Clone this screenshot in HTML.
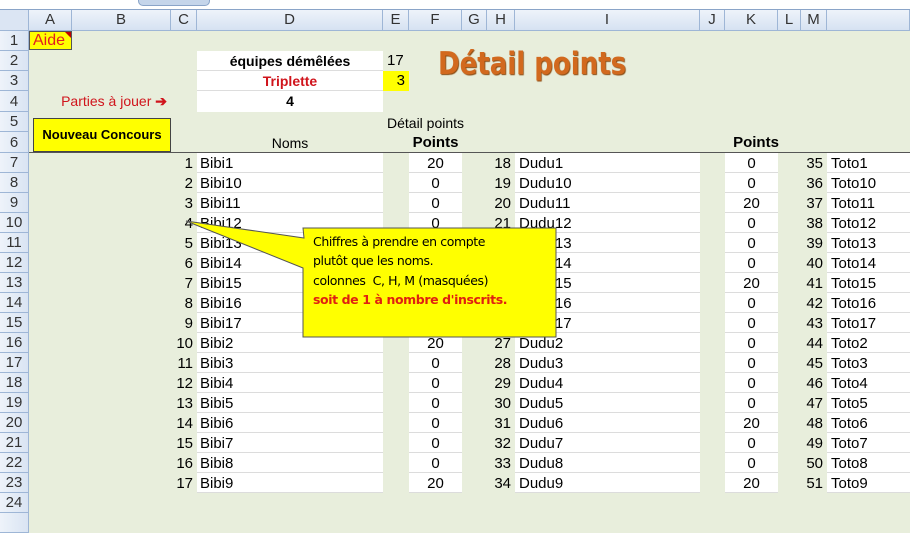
<!DOCTYPE html>
<html><head><meta charset="utf-8"><style>
*{margin:0;padding:0;box-sizing:border-box}
body{width:910px;height:518px;overflow:hidden;background:#E8EEDC;font-family:"Liberation Sans",Arial,sans-serif;font-size:15px;position:relative;color:#000}
.top{position:absolute;left:0;top:0;width:910px;height:10px;background:#fff;border-bottom:1px solid #8aa4c8}
.tab{position:absolute;left:138px;top:0;width:72px;height:6px;background:#c5d5ea;border:1px solid #8aa4c8;border-top:none;border-radius:0 0 5px 5px}
.ch{position:absolute;top:10px;height:21px;background:linear-gradient(#eef3fa,#d6e2f2);border-right:1px solid #9eb6d6;border-bottom:1px solid #9eb6d6;text-align:center;line-height:20px;color:#333;font-size:15px}
.rh{position:absolute;left:0;width:29px;background:linear-gradient(90deg,#eef3fa,#d9e4f3);border-right:1px solid #9eb6d6;border-bottom:1px solid #9eb6d6;text-align:center;color:#333;font-size:15px}
.r{position:absolute;left:29px;width:881px;height:20px}
.r span{position:absolute;top:0;height:20px;line-height:21px;white-space:nowrap}
.w{background:#fff;border-bottom:1px solid #dcdcdc}
.c{left:142px;width:26px;text-align:right;padding-right:4px}
.d{left:168px;width:186px;padding-left:3px}
.f{left:380px;width:53px;text-align:center}
.h{left:458px;width:28px;text-align:right;padding-right:4px}
.i{left:486px;width:185px;padding-left:4px}
.k{left:696px;width:53px;text-align:center}
.m{left:772px;width:26px;text-align:right;padding-right:4px}
.n{left:798px;width:83px;padding-left:4px}
.ab{position:absolute}
</style></head><body>
<div class="top"><div class="tab"></div></div>
<div class="ch" style="left:0;width:29px;background:#dbe5f3"></div>
<div class="ch" style="left:29px;width:43px">A</div>
<div class="ch" style="left:72px;width:99px">B</div>
<div class="ch" style="left:171px;width:26px">C</div>
<div class="ch" style="left:197px;width:186px">D</div>
<div class="ch" style="left:383px;width:26px">E</div>
<div class="ch" style="left:409px;width:53px">F</div>
<div class="ch" style="left:462px;width:25px">G</div>
<div class="ch" style="left:487px;width:28px">H</div>
<div class="ch" style="left:515px;width:185px">I</div>
<div class="ch" style="left:700px;width:25px">J</div>
<div class="ch" style="left:725px;width:53px">K</div>
<div class="ch" style="left:778px;width:23px">L</div>
<div class="ch" style="left:801px;width:26px">M</div>
<div class="ch" style="left:827px;width:83px"></div>

<div class="rh" style="top:31px;height:20px;line-height:20px">1</div>
<div class="rh" style="top:51px;height:20px;line-height:20px">2</div>
<div class="rh" style="top:71px;height:20px;line-height:20px">3</div>
<div class="rh" style="top:91px;height:21px;line-height:21px">4</div>
<div class="rh" style="top:112px;height:20px;line-height:20px">5</div>
<div class="rh" style="top:132px;height:21px;line-height:21px">6</div>
<div class="rh" style="top:153px;height:20px;line-height:20px">7</div>
<div class="rh" style="top:173px;height:20px;line-height:20px">8</div>
<div class="rh" style="top:193px;height:20px;line-height:20px">9</div>
<div class="rh" style="top:213px;height:20px;line-height:20px">10</div>
<div class="rh" style="top:233px;height:20px;line-height:20px">11</div>
<div class="rh" style="top:253px;height:20px;line-height:20px">12</div>
<div class="rh" style="top:273px;height:20px;line-height:20px">13</div>
<div class="rh" style="top:293px;height:20px;line-height:20px">14</div>
<div class="rh" style="top:313px;height:20px;line-height:20px">15</div>
<div class="rh" style="top:333px;height:20px;line-height:20px">16</div>
<div class="rh" style="top:353px;height:20px;line-height:20px">17</div>
<div class="rh" style="top:373px;height:20px;line-height:20px">18</div>
<div class="rh" style="top:393px;height:20px;line-height:20px">19</div>
<div class="rh" style="top:413px;height:20px;line-height:20px">20</div>
<div class="rh" style="top:433px;height:20px;line-height:20px">21</div>
<div class="rh" style="top:453px;height:20px;line-height:20px">22</div>
<div class="rh" style="top:473px;height:20px;line-height:20px">23</div>
<div class="rh" style="top:493px;height:20px;line-height:20px">24</div>
<div class="rh" style="top:513px;height:20px;line-height:20px"></div>

<div class="ab" style="left:29px;top:31px;width:43px;height:19px;background:#ffff00;border:1px solid #555;color:#e02020;line-height:18px;padding-left:3px;font-size:16px">Aide</div>
<div class="ab" style="left:65px;top:32px;width:0;height:0;border-top:6px solid #c00000;border-left:6px solid transparent"></div>

<div class="ab" style="left:197px;top:51px;width:186px;height:20px;background:#fff;border-bottom:1px solid #ddd;text-align:center;line-height:20px;font-weight:bold;font-size:14px">équipes démêlées</div>
<div class="ab" style="left:197px;top:71px;width:186px;height:20px;background:#fff;border-bottom:1px solid #ddd;text-align:center;line-height:20px;font-weight:bold;font-size:14px;color:#d0141c">Triplette</div>
<div class="ab" style="left:197px;top:91px;width:186px;height:21px;background:#fff;text-align:center;line-height:21px;font-weight:bold;font-size:14px">4</div>
<div class="ab" style="left:383px;top:51px;width:26px;height:20px;line-height:20px;padding-left:4px">17</div>
<div class="ab" style="left:383px;top:71px;width:26px;height:20px;line-height:20px;background:#ffff00;text-align:right;padding-right:4px">3</div>
<div class="ab" style="left:29px;top:91px;width:142px;height:21px;line-height:21px;text-align:right;padding-right:4px;color:#d0141c;font-size:14px">Parties à jouer <b>➔</b></div>

<div class="ab" style="left:438px;top:46px;font-size:31px;font-weight:bold;color:#d2691e;text-shadow:1px 1px 1px #8a4a10;font-family:'DejaVu Sans','Liberation Sans',sans-serif;transform:scaleX(0.84);transform-origin:left;white-space:nowrap">Détail points</div>

<div class="ab" style="left:33px;top:118px;width:138px;height:34px;background:#ffff00;border:1px solid #444;text-align:center;line-height:32px;font-weight:bold;font-size:13px">Nouveau Concours</div>

<div class="ab" style="left:387px;top:113px;line-height:20px;font-size:14px">Détail points</div>
<div class="ab" style="left:197px;top:133px;width:186px;text-align:center;line-height:20px;font-size:14px">Noms</div>
<div class="ab" style="left:409px;top:133px;width:53px;text-align:center;line-height:20px;font-weight:bold;font-size:15px">Points</div>
<div class="ab" style="left:725px;top:133px;width:62px;text-align:center;line-height:20px;font-weight:bold;font-size:15px">Points</div>
<div class="ab" style="left:29px;top:152px;width:881px;height:1px;background:#555"></div>

<div class="r" style="top:153px"><span class="c">1</span><span class="d w">Bibi1</span><span class="f w">20</span><span class="h">18</span><span class="i w">Dudu1</span><span class="k w">0</span><span class="m">35</span><span class="n w">Toto1</span></div>
<div class="r" style="top:173px"><span class="c">2</span><span class="d w">Bibi10</span><span class="f w">0</span><span class="h">19</span><span class="i w">Dudu10</span><span class="k w">0</span><span class="m">36</span><span class="n w">Toto10</span></div>
<div class="r" style="top:193px"><span class="c">3</span><span class="d w">Bibi11</span><span class="f w">0</span><span class="h">20</span><span class="i w">Dudu11</span><span class="k w">20</span><span class="m">37</span><span class="n w">Toto11</span></div>
<div class="r" style="top:213px"><span class="c">4</span><span class="d w">Bibi12</span><span class="f w">0</span><span class="h">21</span><span class="i w">Dudu12</span><span class="k w">0</span><span class="m">38</span><span class="n w">Toto12</span></div>
<div class="r" style="top:233px"><span class="c">5</span><span class="d w">Bibi13</span><span class="f w">0</span><span class="h">22</span><span class="i w">Dudu13</span><span class="k w">0</span><span class="m">39</span><span class="n w">Toto13</span></div>
<div class="r" style="top:253px"><span class="c">6</span><span class="d w">Bibi14</span><span class="f w">0</span><span class="h">23</span><span class="i w">Dudu14</span><span class="k w">0</span><span class="m">40</span><span class="n w">Toto14</span></div>
<div class="r" style="top:273px"><span class="c">7</span><span class="d w">Bibi15</span><span class="f w">0</span><span class="h">24</span><span class="i w">Dudu15</span><span class="k w">20</span><span class="m">41</span><span class="n w">Toto15</span></div>
<div class="r" style="top:293px"><span class="c">8</span><span class="d w">Bibi16</span><span class="f w">0</span><span class="h">25</span><span class="i w">Dudu16</span><span class="k w">0</span><span class="m">42</span><span class="n w">Toto16</span></div>
<div class="r" style="top:313px"><span class="c">9</span><span class="d w">Bibi17</span><span class="f w">0</span><span class="h">26</span><span class="i w">Dudu17</span><span class="k w">0</span><span class="m">43</span><span class="n w">Toto17</span></div>
<div class="r" style="top:333px"><span class="c">10</span><span class="d w">Bibi2</span><span class="f w">20</span><span class="h">27</span><span class="i w">Dudu2</span><span class="k w">0</span><span class="m">44</span><span class="n w">Toto2</span></div>
<div class="r" style="top:353px"><span class="c">11</span><span class="d w">Bibi3</span><span class="f w">0</span><span class="h">28</span><span class="i w">Dudu3</span><span class="k w">0</span><span class="m">45</span><span class="n w">Toto3</span></div>
<div class="r" style="top:373px"><span class="c">12</span><span class="d w">Bibi4</span><span class="f w">0</span><span class="h">29</span><span class="i w">Dudu4</span><span class="k w">0</span><span class="m">46</span><span class="n w">Toto4</span></div>
<div class="r" style="top:393px"><span class="c">13</span><span class="d w">Bibi5</span><span class="f w">0</span><span class="h">30</span><span class="i w">Dudu5</span><span class="k w">0</span><span class="m">47</span><span class="n w">Toto5</span></div>
<div class="r" style="top:413px"><span class="c">14</span><span class="d w">Bibi6</span><span class="f w">0</span><span class="h">31</span><span class="i w">Dudu6</span><span class="k w">20</span><span class="m">48</span><span class="n w">Toto6</span></div>
<div class="r" style="top:433px"><span class="c">15</span><span class="d w">Bibi7</span><span class="f w">0</span><span class="h">32</span><span class="i w">Dudu7</span><span class="k w">0</span><span class="m">49</span><span class="n w">Toto7</span></div>
<div class="r" style="top:453px"><span class="c">16</span><span class="d w">Bibi8</span><span class="f w">0</span><span class="h">33</span><span class="i w">Dudu8</span><span class="k w">0</span><span class="m">50</span><span class="n w">Toto8</span></div>
<div class="r" style="top:473px"><span class="c">17</span><span class="d w">Bibi9</span><span class="f w">20</span><span class="h">34</span><span class="i w">Dudu9</span><span class="k w">20</span><span class="m">51</span><span class="n w">Toto9</span></div>

<svg class="ab" style="left:0;top:0" width="910" height="518">
<polygon points="186,221 304,238 303,228 556,228 556,337 303,337 303,268" fill="#ffff00" stroke="#555" stroke-width="1"/>
</svg>
<div class="ab" style="left:313px;top:232px;font-family:'DejaVu Sans','Liberation Sans',sans-serif;font-size:12.5px;line-height:19.3px;letter-spacing:-0.4px">
Chiffres à prendre en compte<br>plutôt que les noms.<br>colonnes &nbsp;C, H, M (masquées)<br><b style="color:#e02010">soit de 1 à nombre d'inscrits.</b></div>
</body></html>
